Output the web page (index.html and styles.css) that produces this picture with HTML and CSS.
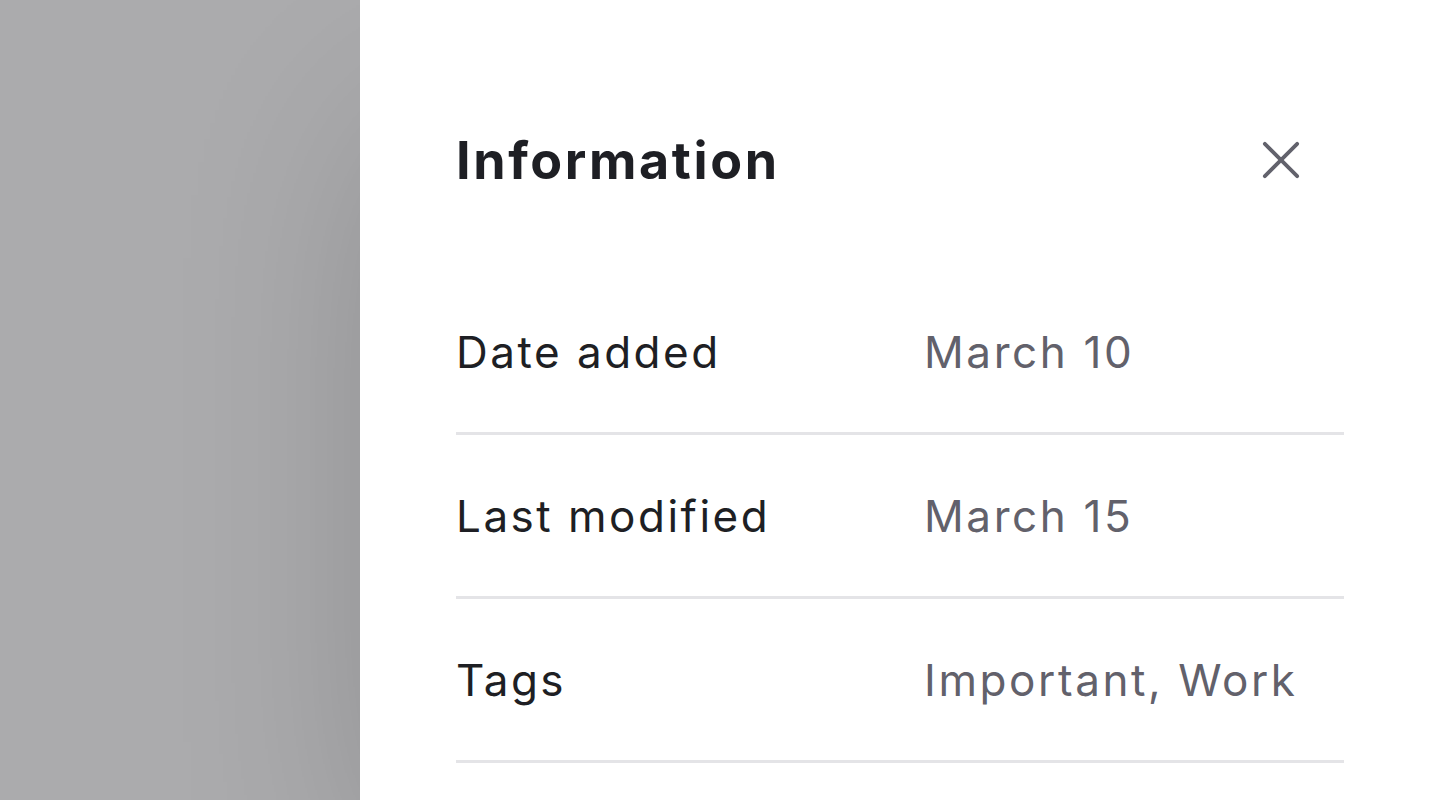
FILE: index.html
```html
<!DOCTYPE html>
<html lang="en">
<head>
<meta charset="utf-8">
<title>Information</title>
<link rel="stylesheet" href="styles.css">
</head>
<body>
<div class="screen">
  <div class="backdrop"></div>
  <aside class="panel">
    <header class="panel-head">
      <h1 class="title">Information</h1>
      <button class="close" aria-label="Close">
        <svg width="40" height="40" viewBox="0 0 40 40" fill="none" stroke="currentColor" stroke-width="4" stroke-linecap="round">
          <path d="M3 3 L37 37 M37 3 L3 37"/>
        </svg>
      </button>
    </header>
    <dl class="info">
      <div class="row"><dt>Date added</dt><dd>March 10</dd></div>
      <div class="row"><dt>Last modified</dt><dd>March 15</dd></div>
      <div class="row"><dt>Tags</dt><dd>Important, Work</dd></div>
    </dl>
  </aside>
</div>
</body>
</html>
```
FILE: styles.css
```css
* { box-sizing: border-box; }
html, body { margin: 0; padding: 0; height: 100%; }
body { font-family: Inter, "Noto Sans", sans-serif; overflow: hidden; }
.screen { display: flex; width: 1440px; height: 800px; background: #ababad; }
.backdrop { flex: 0 0 360px; }
.panel {
  flex: 1;
  background: #ffffff;
  padding: 128px 96px 0 96px;
  box-shadow: 0 100px 200px -40px rgba(0,0,0,0.22);
}
.panel-head { display: flex; align-items: center; justify-content: space-between; height: 64px; }
.title { margin: 0; font-size: 52px; font-weight: 700; color: #1e1f24; letter-spacing: 2.6px; }
.close { background: none; border: 0; padding: 0; margin-right: 44px; color: #62626c; display: flex; width: 38px; height: 38px; }
.close svg { width: 38px; height: 38px; }
.info { margin: 79px 0 0; }
.row {
  display: grid;
  grid-template-columns: 468px 1fr;
  height: 164px;
  align-items: center;
  border-bottom: 3px solid #e4e4e7;
}
.row dt { font-size: 44px; color: #1e1f24; margin: 0; letter-spacing: 2.5px; }
.row dd { font-size: 44px; color: #62616b; margin: 0; letter-spacing: 2.6px; }
```
